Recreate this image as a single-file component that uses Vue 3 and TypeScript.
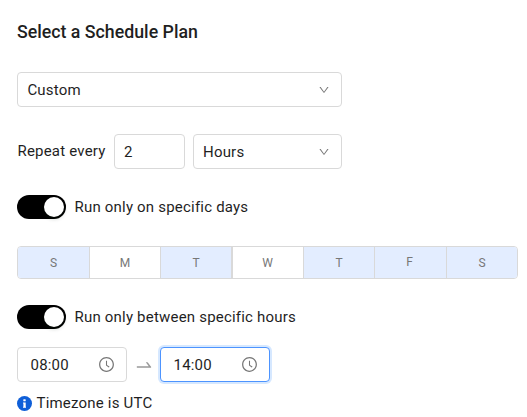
<script setup lang="ts">
import { ref } from 'vue'

interface Day {
  label: string
  selected: boolean
}

const days = ref<Day[]>([
  { label: 'S', selected: true },
  { label: 'M', selected: false },
  { label: 'T', selected: true },
  { label: 'W', selected: false },
  { label: 'T', selected: true },
  { label: 'F', selected: true },
  { label: 'S', selected: true },
])

const times = ref<string[]>(['08:00', '14:00'])
const onlyDays = ref(true)
const onlyHours = ref(true)

const chevron =
  'M884 256h-75c-5.1 0-9.9 2.5-12.9 6.6L512 654.2 227.9 262.6c-3-4.1-7.8-6.6-12.9-6.6h-75c-6.5 0-10.3 7.4-6.5 12.7l352.6 486.1c12.8 17.6 39 17.6 51.7 0l352.6-486.1c3.9-5.3.1-12.7-6.4-12.7z'
const clock =
  'M512 64C264.6 64 64 264.6 64 512s200.6 448 448 448 448-200.6 448-448S759.4 64 512 64zm0 820c-205.4 0-372-166.6-372-372s166.6-372 372-372 372 166.6 372 372-166.6 372-372 372zM686.7 638.6L544.1 535.5V288c0-4.4-3.6-8-8-8H488c-4.4 0-8 3.6-8 8v275.4c0 2.6 1.2 5 3.3 6.5l165.4 120.6c3.6 2.6 8.6 1.8 11.2-1.7l28.6-39c2.6-3.7 1.8-8.7-1.8-11.2z'
const arrow =
  'M873.1 596.2l-164-208A32 32 0 00684 376h-64.8c-6.7 0-10.4 7.7-6.3 13l144.3 183H152c-4.4 0-8 3.6-8 8v60c0 4.4 3.6 8 8 8h695.9c26.8 0 41.7-30.8 25.2-51.8z'
</script>

<template>
  <main class="plan">
    <h1 class="title">Select a Schedule Plan</h1>

    <div class="field select wide">
      <span>Custom</span>
      <svg class="chevron" viewBox="0 0 1024 1024"><path :d="chevron" /></svg>
    </div>

    <div class="repeat">
      <span class="repeat-label">Repeat every</span>
      <div class="field count"><span>2</span></div>
      <div class="field select unit">
        <span>Hours</span>
        <svg class="chevron" viewBox="0 0 1024 1024"><path :d="chevron" /></svg>
      </div>
    </div>

    <div class="toggle-row">
      <button class="switch" :class="{ on: onlyDays }" role="switch" :aria-checked="onlyDays" @click="onlyDays = !onlyDays"><i class="knob"></i></button>
      <span>Run only on specific days</span>
    </div>

    <div class="days">
      <div v-for="(day, i) in days" :key="i" class="day" :class="{ selected: day.selected }" @click="day.selected = !day.selected">{{ day.label }}</div>
    </div>

    <div class="toggle-row">
      <button class="switch" :class="{ on: onlyHours }" role="switch" :aria-checked="onlyHours" @click="onlyHours = !onlyHours"><i class="knob"></i></button>
      <span>Run only between specific hours</span>
    </div>

    <div class="times">
      <div class="field time">
        <span>{{ times[0] }}</span>
        <svg class="clock" viewBox="0 0 1024 1024"><path :d="clock" /></svg>
      </div>
      <svg class="arrow" viewBox="0 0 1024 1024"><path :d="arrow" /></svg>
      <div class="field time focused">
        <span>{{ times[1] }}</span>
        <svg class="clock" viewBox="0 0 1024 1024"><path :d="clock" /></svg>
      </div>
    </div>

    <div class="note">
      <svg class="info" viewBox="0 0 15 15">
        <circle cx="7.5" cy="7.5" r="7.5" fill="#0f5fd8" />
        <rect x="6.3" y="3.2" width="2.4" height="2.1" rx="0.6" fill="#fff" />
        <path d="M6 6.5h2.7v4.2H9v1H6v-1h.4V7.5H6z" fill="#fff" />
      </svg>
      <span>Timezone is UTC</span>
    </div>
  </main>
</template>

<style>
body {
  background: #fff;
}
</style>

<style scoped>
.plan {
  box-sizing: border-box;
  width: 527px;
  height: 417px;
  padding: 20px 9px 0 17px;
  overflow: hidden;
  font-family: Roboto, sans-serif;
  font-size: 15px;
  line-height: 24px;
  letter-spacing: 0.2px;
  color: #1f1f1f;
}

.title {
  margin: 0 0 28px;
  font-size: 17.75px;
  font-weight: 500;
  line-height: 24px;
  letter-spacing: 0;
}

.field {
  box-sizing: border-box;
  display: flex;
  align-items: center;
  height: 35px;
  padding: 0 9px;
  border: 1px solid #d9d9d9;
  border-radius: 4px;
  background: #fff;
}

.select,
.time {
  justify-content: space-between;
}

.wide {
  width: 325px;
  padding-left: 9.4px;
}

.chevron {
  width: 12px;
  height: 12px;
  margin-right: 2px;
  fill: #777;
}

.repeat {
  display: flex;
  align-items: center;
  width: 325px;
  margin-top: 27px;
}

.repeat-label {
  flex: 1;
  padding: 0 0 2px 0.5px;
}

.count {
  width: 71px;
  margin-right: 8px;
}

.unit {
  width: 149px;
}

.toggle-row {
  display: flex;
  align-items: center;
  gap: 8.5px;
  height: 24px;
  margin-top: 26px;
}

.switch {
  display: flex;
  box-sizing: border-box;
  width: 49px;
  height: 24px;
  padding: 2px;
  border: 0;
  border-radius: 12px;
  background: #bfbfbf;
}

.switch.on {
  justify-content: flex-end;
  background: #000;
}

.knob {
  width: 20px;
  height: 20px;
  border-radius: 50%;
  background: #fff;
  box-shadow: 0 2px 4px rgba(0, 35, 11, 0.2);
}

.days {
  display: grid;
  grid-template-columns: 71px 71px 71px 72px 71px 72px 71px;
  box-sizing: border-box;
  height: 33px;
  margin-top: 27px;
  border: 1px solid #d9d9d9;
  border-radius: 4px;
  overflow: hidden;
}

.day {
  padding-top: 1px;
  font-size: 12px;
  line-height: 31px;
  letter-spacing: 0;
  text-align: center;
  color: #777;
}

.day + .day {
  border-left: 1px solid #d9d9d9;
}

.day:nth-child(4) {
  padding-right: 1px;
  border-left-width: 2px;
}

.day:nth-child(6) {
  padding-top: 0;
  padding-right: 2px;
}

.day.selected {
  background: #e3edff;
}

.times {
  display: flex;
  align-items: center;
  margin-top: 18px;
}

.time {
  width: 110px;
  padding: 0 11px 0 12.5px;
}

.focused {
  border-color: #4d94ff;
  box-shadow: 0 0 0 2px #d6e8ff;
}

.clock {
  width: 17px;
  height: 17px;
  fill: #777;
}

.arrow {
  width: 20px;
  height: 20px;
  margin: 0 6px 0 7px;
  fill: #999;
}

.note {
  display: flex;
  align-items: center;
  gap: 4.5px;
  margin-top: 9px;
}

.info {
  width: 15px;
  height: 15px;
}
</style>
